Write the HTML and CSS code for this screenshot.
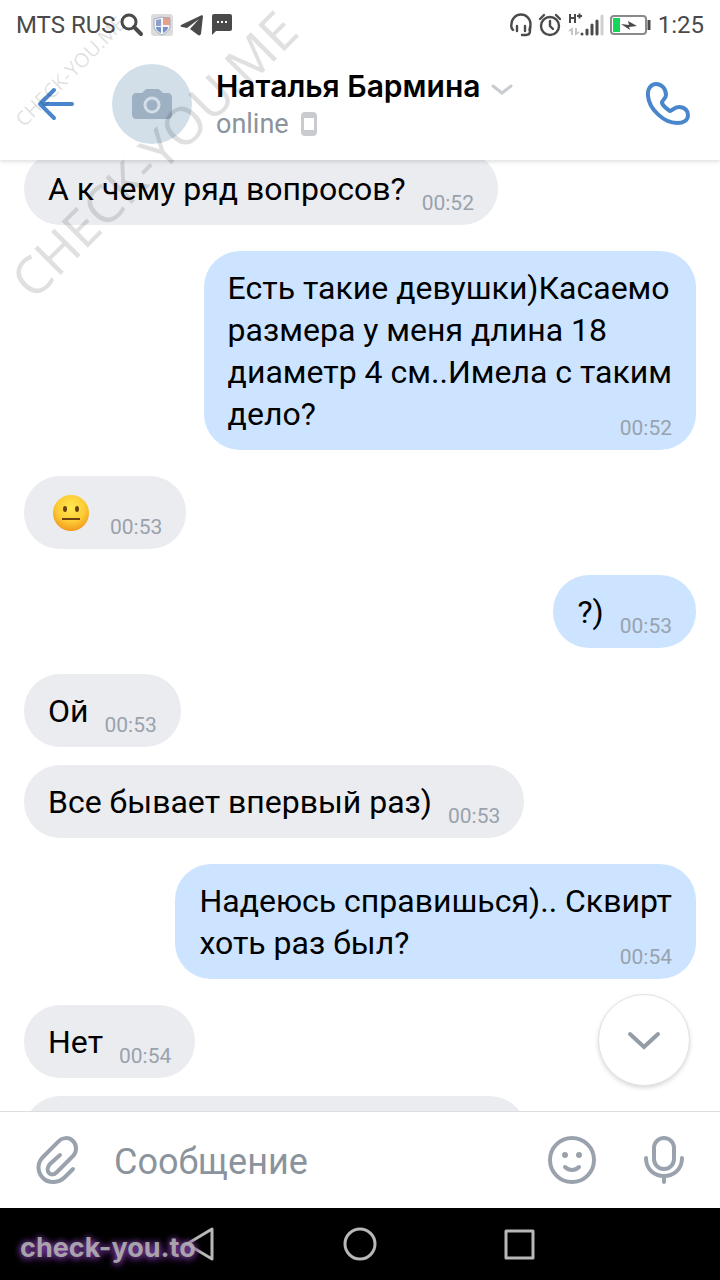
FILE: index.html
```
<!DOCTYPE html>
<html lang="ru">
<head>
    <meta charset="UTF-8">
    <meta name="viewport" content="width=device-width, initial-scale=1.0">
    <title>Наталья Бармина</title>
    <link rel="stylesheet" href="styles.css">
</head>
<body>
    <div class="app">
        <!-- Status bar -->
        <div class="status-bar">
            <span>MTS RUS</span>
            <div class="status-icons left">
                <svg width="24" height="24" viewBox="0 0 24 24" fill="none" stroke="#4a4a4a"><circle cx="9" cy="9" r="7" stroke-width="3"/><path d="M14 14l7 7" stroke-width="4" stroke-linecap="round"/></svg>
                <svg width="24" height="24" viewBox="0 0 24 24"><rect x="1" y="1" width="22" height="22" rx="3" fill="#dcdcdc"/><path d="M12 4l8 2v7c0 4-4 7-8 9-4-2-8-5-8-9V6z" fill="#f4f5f8"/><path d="M11 6v7H6V7z" fill="#8f9fc9"/><path d="M13 4l7 0v8h-7z" fill="#e8a189"/><path d="M6 14h5v6c-3-2-5-3-5-6z" fill="#7393cc"/><path d="M13 14h5c0 3-2 4-5 6z" fill="#7b8fc4"/><path d="M12 4l8 2v7c0 4-4 7-8 9-4-2-8-5-8-9V6z" fill="none" stroke="#a4abc0"/></svg>
                <svg width="24" height="24" viewBox="0 0 24 24"><path d="M22 2L1 12c-1 1 0 2 1 2l5 1L19 6 10 16l8 6c2 1 2 0 3-1L23 3z" fill="#4a4a4a"/></svg>
                <svg width="24" height="24" viewBox="0 0 24 24"><path d="M4 1h16a2 2 0 0 1 2 2v13a2 2 0 0 1-2 2H6l-4 4V3a2 2 0 0 1 2-2z" fill="#4a4a4a"/><path d="M7 8h2v2H7zM11 8h2v2h-2zM15 8h2v2h-2z" fill="#fff"/></svg>
            </div>
            <div class="status-icons right">
                <svg width="22" height="24" viewBox="0 0 22 24" fill="none" stroke="#4a4a4a" stroke-width="2.4" stroke-linecap="round"><path d="M3 17C1 15 1 13 1.500 11a9.500 9.500 0 0 1 19 0c0 3 0 4-1 6M7 13v5M15 13v5"/><path d="M20 14v4c0 3-2 4-4 4h-4"/></svg>
                <svg width="24" height="24" viewBox="0 0 24 24" fill="none" stroke="#4a4a4a" stroke-width="2.4" stroke-linecap="round"><circle cx="12" cy="13" r="9"/><path d="M12 8v5l3 3M2 6l4-4M22 6l-4-4"/></svg>
                <svg width="36" height="24" viewBox="0 0 36 24" fill="none"><path d="M2 1v9M7 1v9M2 5h5M9 3h5M11.500 0.500v5" stroke="#4a4a4a" stroke-width="2"/><path d="M1 18l3-2v6M8 15v6l3-2" stroke="#c6c6c6" stroke-width="2"/><g stroke-width="3" stroke-linecap="round"><path d="M14 21v0M19 17v4M24 12v9M29 8v13" stroke="#4a4a4a"/><path d="M34 3v18" stroke="#cfcfcf"/></g></svg>
                <svg width="42" height="24" viewBox="0 0 42 24"><rect x="1" y="3" width="35" height="18" rx="3" fill="#fff" stroke="#8a8a8a" stroke-width="2"/><rect x="3" y="5" width="7" height="14" fill="#13d65b"/><path d="M11 11l8 1-1-4 9 5-8 1 1 3z" fill="#4a4a4a"/><path d="M39 7v10" stroke="#4a4a4a" stroke-width="3"/></svg>
            </div>
            <span>1:25</span>
        </div>

        <!-- Chat header -->
        <header class="header">
            <button class="icon-button back" aria-label="Назад">
                <svg width="40" height="36" viewBox="0 0 40 36" fill="none" stroke="#4986cc" stroke-width="4" stroke-linecap="round" stroke-linejoin="round"><path d="M36 18H4M18 4L4 18l14 14"/></svg>
            </button>
            <div class="avatar">
                <svg width="40" height="30" viewBox="0 0 40 30"><path d="M4 4h6l3-3c1-1 2-1 3-1h9c1 0 2 0 3 1l3 3h5c2 0 4 2 4 4v18c0 2-2 4-4 4H4c-2 0-4-2-4-4V8c0-2 2-4 4-4z" fill="#9db1c3"/><circle cx="20" cy="16" r="7" fill="none" stroke="#d3dfe8" stroke-width="3"/></svg>
            </div>
            <div class="contact">
                <h1>Наталья Бармина
                    <svg width="22" height="20" viewBox="0 0 22 20" fill="none" stroke="#c8cbd0" stroke-width="3" stroke-linecap="round"><path d="M2 10l9 7 9-7"/></svg>
                </h1>
                <p>online
                    <svg width="16" height="24" viewBox="0 0 16 24"><path fill-rule="evenodd" d="M4 0h8a4 4 0 0 1 4 4v16a4 4 0 0 1-4 4H4a4 4 0 0 1-4-4V4a4 4 0 0 1 4-4zM3 6v12h10V6z" fill="#c8cbd0"/></svg>
                </p>
            </div>
            <button class="icon-button call" aria-label="Позвонить">
                <svg width="48" height="48" viewBox="0 0 48 48" fill="none" stroke="#4986cc" stroke-width="4" stroke-linejoin="round"><path d="M4 16C3 8 8 4 12 4c6 0 10 5 10 11 0 4-5 6-4 8 1 3 5 6 8 8 2 0 4-4 9-4 6 0 9 4 9 8 0 5-4 8-11 8C20 43 5 29 4 16z"/></svg>
            </button>
        </header>

        <!-- Messages -->
        <main class="chat">
            <div class="message">А к чему ряд вопросов?<time>00:52</time></div>
            <div class="message mine">Есть такие девушки)Касаемо<br>размера у меня длина 18<br>диаметр 4 см..Имела с таким<br>дело?<time>00:52</time></div>
            <div class="message">
                <svg class="emoji" role="img" aria-label="😐" width="46" height="38" viewBox="0 0 46 38">
                    <defs><radialGradient id="face" cx="50%" cy="35%" r="65%"><stop offset="0" stop-color="#ffe84f"/><stop offset="60%" stop-color="#fdcb35"/><stop offset="100%" stop-color="#f19a1c"/></radialGradient></defs>
                    <circle cx="23" cy="19" r="18" fill="url(#face)"/>
                    <ellipse cx="17" cy="15" rx="2" ry="3" fill="#6b400c"/><ellipse cx="29" cy="15" rx="2" ry="3" fill="#6b400c"/>
                    <path d="M14 25h18" stroke="#6b400c" stroke-width="2"/>
                </svg><time>00:53</time>
            </div>
            <div class="message mine">?)<time>00:53</time></div>
            <div class="message">Ой<time>00:53</time></div>
            <div class="message">Все бывает впервый раз)<time>00:53</time></div>
            <div class="message mine">Надеюсь справишься).. Сквирт<br>хоть раз был?<time>00:54</time></div>
            <div class="message">Нет<time>00:54</time></div>
            <div class="message next"></div>
        </main>

        <!-- Message form -->
        <form class="composer">
            <button type="button" class="scroll-down" aria-label="Вниз">
                <svg width="34" height="20" viewBox="0 0 34 20" fill="none" stroke="#949ca5" stroke-width="4" stroke-linecap="round"><path d="M3 4l14 13L31 4"/></svg>
            </button>
            <button type="button" class="icon-button" aria-label="Прикрепить">
                <svg width="48" height="52" viewBox="0 0 48 52" fill="none" stroke="#99a2ad" stroke-width="4" stroke-linecap="round"><path d="M39 35l-8 8C25 49 15 50 9 44S3 29 9 23L24 8c4-5 11-5 15-1s4 11 0 15L23 38c-3 3-6 3-8 1s-2-6 1-9l10-9"/></svg>
            </button>
            <input type="text" placeholder="Сообщение" aria-label="Сообщение">
            <button type="button" class="icon-button" aria-label="Смайлы">
                <svg width="48" height="48" viewBox="0 0 48 48" fill="none" stroke="#99a2ad" stroke-width="4" stroke-linecap="round"><circle cx="24" cy="24" r="22"/><path d="M17 31c4 4 10 4 14 0"/><circle cx="17" cy="19" r="3" fill="#99a2ad" stroke="none"/><circle cx="31" cy="19" r="3" fill="#99a2ad" stroke="none"/></svg>
            </button>
            <button type="button" class="icon-button" aria-label="Голосовое сообщение">
                <svg width="48" height="48" viewBox="0 0 48 48" fill="none" stroke="#99a2ad" stroke-width="4" stroke-linecap="round"><rect x="14" y="2" width="20" height="31" rx="10"/><path d="M6 22c0 24 36 24 36 0M24 41v5"/></svg>
            </button>
        </form>

        <!-- Navigation bar -->
        <nav class="nav-bar">
            <button aria-label="Назад"><svg width="34" height="36" viewBox="0 0 34 36" fill="none" stroke="#b8b8b8" stroke-width="3" stroke-linejoin="round"><path d="M29 3v30L4 18z"/></svg></button>
            <button aria-label="Домой"><svg width="34" height="34" viewBox="0 0 34 34" fill="none" stroke="#b8b8b8" stroke-width="3"><circle cx="17" cy="17" r="15"/></svg></button>
            <button aria-label="Недавние"><svg width="34" height="34" viewBox="0 0 34 34" fill="none" stroke="#b8b8b8" stroke-width="3" stroke-linejoin="round"><rect x="3" y="4" width="27" height="27"/></svg></button>
            <span class="site-mark">check-you.to</span>
        </nav>

        <span class="watermark small">CHECK-YOU.ME</span>
        <span class="watermark large">CHECK-YOU.ME</span>
    </div>
</body>
</html>
```
FILE: styles.css
```
* {
    margin: 0;
    padding: 0;
    box-sizing: border-box;
}

body {
    font-family: Roboto, 'Noto Sans', sans-serif;
    background: #fff;
    color: #000;
}

button {
    background: none;
    border: none;
    cursor: pointer;
}

svg {
    display: block;
    flex-shrink: 0;
}

.app {
    position: relative;
    display: flex;
    flex-direction: column;
    height: 100vh;
    overflow: hidden;
}

/* Status bar */
.status-bar {
    display: flex;
    align-items: center;
    height: 48px;
    padding: 2px 16px 0;
    color: #4a4a4a;
    font-size: 24px;
}

.status-icons {
    display: flex;
    align-items: center;
    gap: 6px;
}

.status-icons.left {
    margin-left: 4px;
}

.status-icons.right {
    margin-left: auto;
    margin-right: 6px;
}

/* Header */
.header {
    position: relative;
    z-index: 1;
    display: flex;
    align-items: center;
    gap: 24px;
    height: 112px;
    padding: 0 24px;
    flex-shrink: 0;
    box-shadow: 0 2px 4px rgba(0, 0, 0, 0.12);
    clip-path: inset(0 0 -8px 0);
}

.icon-button {
    display: flex;
    align-items: center;
    justify-content: center;
    width: 48px;
    height: 64px;
    flex-shrink: 0;
}

.back {
    width: 64px;
}

.call {
    width: 56px;
}

.avatar {
    display: flex;
    align-items: center;
    justify-content: center;
    width: 80px;
    height: 80px;
    flex-shrink: 0;
    border-radius: 50%;
    background: #d3dfe8;
}

.contact {
    flex: 1;
    min-width: 0;
}

.contact h1,
.contact p {
    display: flex;
    align-items: center;
    gap: 12px;
}

.contact h1 {
    gap: 10px;
    font-family: Inter, Roboto, sans-serif;
    font-size: 30px;
    font-weight: 600;
    line-height: 40px;
}

.contact p {
    color: #8b939d;
    font-size: 27px;
    line-height: 36px;
}

/* Chat */
.chat {
    display: flex;
    flex: 1;
    flex-direction: column;
    align-items: flex-start;
    gap: 18px;
    min-height: 0;
    padding: 0 24px;
    overflow: hidden;
}

.message {
    flex-shrink: 0;
    min-height: 73px;
    padding: 16px 24px 15px;
    border-radius: 36px;
    background: #ebecf0;
    font-size: 32px;
    line-height: 42px;
}

/* first message is scrolled under the header */
.message:first-child {
    margin-top: -8px;
}

.message.mine {
    align-self: flex-end;
    margin: 8px 0;
    background: #cce4ff;
}

.message.next {
    width: 502px;
}

.message time {
    float: right;
    margin: 21px 0 -8px 16px;
    color: #99a2ad;
    font-size: 21px;
    line-height: 28px;
}

.emoji {
    display: inline-block;
    vertical-align: -8px;
}

/* Composer */
.composer {
    position: relative;
    display: flex;
    align-items: center;
    height: 97px;
    padding: 0 32px 0 34px;
    flex-shrink: 0;
    border-top: 1px solid #dcdee0;
}

.composer input {
    flex: 1;
    min-width: 0;
    margin: 0 32px;
    padding-top: 4px;
    border: none;
    outline: none;
    background: none;
    font-family: inherit;
    font-size: 36px;
}

.composer input::placeholder {
    color: #8b939d;
}

.composer .icon-button:last-child {
    margin-left: 44px;
}

.scroll-down {
    position: absolute;
    right: 30px;
    bottom: 122px;
    display: flex;
    align-items: center;
    justify-content: center;
    width: 92px;
    height: 92px;
    border: 1px solid #e1e2e4;
    border-radius: 50%;
    background: #fff;
    box-shadow: 0 2px 4px rgba(0, 0, 0, 0.15);
}

/* Navigation bar */
.nav-bar {
    position: relative;
    display: flex;
    align-items: center;
    justify-content: center;
    gap: 126px;
    height: 72px;
    flex-shrink: 0;
    background: #000;
}

.site-mark {
    position: absolute;
    left: 20px;
    top: 24px;
    color: rgba(180, 180, 180, 0.9);
    font-family: Inter, sans-serif;
    font-size: 27px;
    font-weight: 700;
    line-height: 32px;
    text-shadow: 0 0 6px #8a45b0, 0 2px 8px #6a3090;
}

/* Watermarks */
.watermark {
    position: absolute;
    z-index: 2;
    color: rgba(0, 0, 0, 0.12);
    font-family: 'Noto Sans', sans-serif;
    line-height: 1;
    white-space: nowrap;
    transform: rotate(-45deg);
    transform-origin: 0 100%;
    pointer-events: none;
}

.watermark.small {
    left: 26px;
    top: 110px;
    font-size: 20px;
}

.watermark.large {
    left: 38px;
    top: 254px;
    font-size: 52px;
}
```
